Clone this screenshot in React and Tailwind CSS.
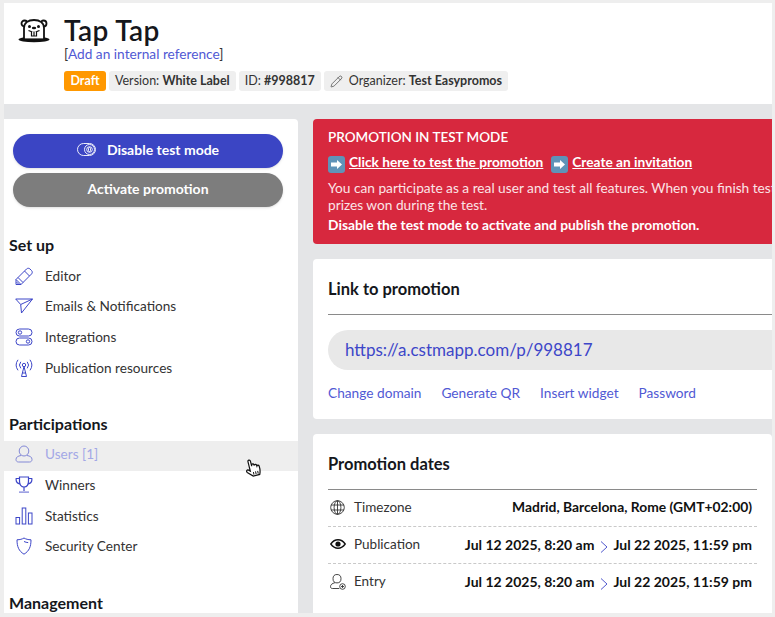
import React from "react";
import { Pencil } from "lucide-react";

function Mascot() {
  return (
    <svg width="32" height="24" viewBox="0 0 32 24" fill="none" stroke="#111" strokeWidth="1.800">
      <ellipse cx="16" cy="20.500" rx="15.500" ry="2.800" fill="#111" stroke="none" />
      <circle cx="6.500" cy="4.500" r="3" fill="#fff" />
      <circle cx="25.500" cy="4.500" r="3" fill="#fff" />
      <path d="M6 20.500V9c0-5 4-8 10-8s10 3 10 8v11.500z" fill="#fff" />
      <path d="M6 20.800h20" stroke="#111" strokeWidth="2" />
      <circle cx="11.500" cy="7.500" r="1.500" fill="#111" stroke="none" />
      <circle cx="20.500" cy="7.500" r="1.500" fill="#111" stroke="none" />
      <ellipse cx="16" cy="9" rx="2.200" ry="1.300" fill="#111" stroke="none" />
      <path d="M10.500 11.500c3 1.500 8 1.500 11 0" strokeWidth="1.300" />
      <path d="M13.500 12.300v4.700h5v-4.700M16 12.800v4" fill="#fff" strokeWidth="1.200" />
    </svg>
  );
}

function ToggleIcon() {
  return (
    <svg width="19" height="13" viewBox="0 0 19 13" fill="none" stroke="#fff" strokeWidth="0.900">
      <rect x="0.500" y="0.500" width="18" height="12" rx="6" />
      <circle cx="12.500" cy="6.500" r="5" />
      <circle cx="12.500" cy="6.500" r="2.800" />
      <rect x="11.500" y="4.500" width="2" height="4" rx="1" />
    </svg>
  );
}

function EditorIcon() {
  return (
    <svg width="18" height="18" viewBox="0 0 18 18" fill="none" stroke="#3d46c8" strokeWidth="1">
      <path d="M1 12.500L11.500 2c1-1 2.500-1 3.500 0l1.500 1.500c1 1 1 2.500 0 3.500L6 17.500H1z" />
      <path d="M1 12.500l5 5M3 10.500l5 5M9.500 4l5 5M1.500 15l2.500 2.500" />
    </svg>
  );
}

function MailIcon() {
  return (
    <svg width="18" height="16" viewBox="0 0 18 16" fill="none" stroke="#3d46c8" strokeWidth="1">
      <path d="M.7 1h16.800L6.500 15 5.700 6.500z" />
      <path d="M5.700 6.500L17.500 1" />
    </svg>
  );
}

function IntegrationsIcon() {
  return (
    <svg width="18" height="18" viewBox="0 0 18 18" fill="none" stroke="#3d46c8" strokeWidth="1">
      <rect x="1" y="1" width="16" height="7" rx="3.500" />
      <circle cx="5" cy="4.500" r="1.700" />
      <rect x="1" y="10" width="16" height="7" rx="3.500" />
      <circle cx="13" cy="13.500" r="1.700" />
    </svg>
  );
}

function AntennaIcon() {
  return (
    <svg width="18" height="18" viewBox="0 0 18 18" fill="none" stroke="#3d46c8" strokeWidth="1">
      <circle cx="9" cy="6" r="1.700" />
      <path d="M9 7.500l-2.500 10M9 7.500l2.500 10M6.500 17.500h5M7.200 14h3.600" />
      <path d="M5.800 2.800a5 5 0 0 0 0 6.500M12.200 2.800a5 5 0 0 1 0 6.500" />
      <path d="M3 .8a9 9 0 0 0 0 10.500M15 .8a9 9 0 0 1 0 10.500" />
    </svg>
  );
}

function UserIcon() {
  return (
    <svg width="18" height="18" viewBox="0 0 18 18" fill="none" stroke="#3d46c8" strokeWidth="1">
      <ellipse cx="9" cy="6" rx="4.800" ry="5" />
      <path d="M6 10.500C3 11 1 12 1 14.500 1 16 2 17 3.500 17h11c1.500 0 2.500-1 2.500-2.500 0-2.500-2-3.500-5-4" />
    </svg>
  );
}

function TrophyIcon() {
  return (
    <svg width="18" height="18" viewBox="0 0 18 18" fill="none" stroke="#3d46c8" strokeWidth="1.200">
      <path d="M4.500 1h9v4c0 3.500-1.800 6-4.500 6S4.500 8.500 4.500 5z" />
      <path d="M4.500 2.500H1.200c-.4 2.800 1 4.800 3.800 5.300M13.500 2.500h3.300c.4 2.800-1 4.800-3.800 5.300" />
      <path d="M9 11v4" />
      <path d="M4 15.300h10V17H4z" fill="#3d46c8" fillOpacity="0.500" stroke="none" />
    </svg>
  );
}

function StatsIcon() {
  return (
    <svg width="18" height="18" viewBox="0 0 18 18" fill="none" stroke="#3d46c8" strokeWidth="1">
      <rect x="1" y="10.500" width="3.600" height="6.500" />
      <rect x="7.200" y="1" width="3.600" height="16" />
      <rect x="13.400" y="6" width="3.600" height="11" />
    </svg>
  );
}

function ShieldIcon() {
  return (
    <svg width="18" height="18" viewBox="0 0 18 18" fill="none" stroke="#3d46c8" strokeWidth="1">
      <path d="M9 1c2 1.200 4 1.700 7 1.800 0 6.700-1.700 11.200-7 14.400C3.700 14 2 9.500 2 2.800 5 2.700 7 2.200 9 1z" />
      <path d="M9 4.500c1.400.7 2.800 1 4.200 1.100" />
    </svg>
  );
}

function GlobeIcon() {
  return (
    <svg width="15" height="15" viewBox="0 0 15 15" fill="none" stroke="#333" strokeWidth="0.900">
      <circle cx="7.500" cy="7.500" r="6.800" />
      <ellipse cx="7.500" cy="7.500" rx="3.400" ry="6.800" />
      <path d="M7.500 .7v13.600M1 5h13M1 10h13" />
    </svg>
  );
}

function EyeIcon() {
  return (
    <svg width="16" height="10" viewBox="0 0 16 10" fill="none" stroke="#111" strokeWidth="1.400">
      <path d="M.8 5C2.800 2.200 5.200.8 8 .8s5.200 1.400 7.200 4.200C13.200 7.800 10.800 9.200 8 9.200S2.800 7.800.8 5z" />
      <circle cx="8" cy="5" r="2.600" fill="#111" stroke="none" />
    </svg>
  );
}

function EntryIcon() {
  return (
    <svg width="16" height="16" viewBox="0 0 16 16" fill="none" stroke="#333" strokeWidth="0.900">
      <ellipse cx="7" cy="4.700" rx="4" ry="4.200" />
      <path d="M4.800 8.800C2.200 9.300.5 10.700.5 12.700c0 1.100.7 1.800 1.800 1.800h7" />
      <circle cx="12.500" cy="12.500" r="2.800" />
      <path d="M12.500 11v3M11 12.500h3" />
    </svg>
  );
}

function HandCursor() {
  return (
    <svg width="19" height="22" viewBox="0 0 17 20" className="absolute left-[240px] top-[16px] -rotate-[14deg]">
      <path
        d="M5 12V3.200c0-1.600 2.300-1.600 2.300 0V8l.2-1c.4-1.200 2-1 2.100.2l.1.800c.4-1.100 2-.9 2.100.3l.1.700c.5-.9 1.900-.6 2 .5.200 2.500 0 5-1.300 7.500H6.500L2 12.500c-1-1.200.5-2.700 1.700-1.700z"
        fill="#fff"
        stroke="#111"
        strokeWidth="1.100"
      />
      <path d="M7.500 13.500v2.500M9.500 13.500v2.500M11.500 13.500v2.500" stroke="#111" strokeWidth="0.900" />
    </svg>
  );
}

function ArrowEmoji() {
  return (
    <span className="inline-flex items-center justify-center w-[17px] h-[17px] rounded-[3px] bg-[#5f93b8] mr-[4px] align-[-3px]">
      <svg width="13" height="11" viewBox="0 0 13 11" fill="#fff">
        <path d="M1 3.500h6V1l5 4.500L7 10V7.500H1z" />
      </svg>
    </span>
  );
}

function SideItem({ icon, label, faded, className }) {
  return (
    <div
      className={
        "flex items-center h-[30px] pb-[4px] pl-[11px] text-[13.600px] " +
        (className ? className + " " : "") +
        (faded ? "bg-[#eeeeee] text-[#a3a8e6]" : "text-[#333]")
      }
    >
      <span className={"w-[18px] h-[18px] flex items-center " + (faded ? "opacity-60" : "")}>{icon}</span>
      <span className="ml-[12px]">{label}</span>
    </div>
  );
}

function Badge({ children, className }) {
  return (
    <span className={"h-[20px] flex items-center px-[6px] rounded-[3px] bg-[#efefef] text-[12.500px] text-[#333] " + (className || "")}>
      {children}
    </span>
  );
}

function DateRow({ icon, label, last, children }) {
  return (
    <div className={"flex items-center justify-between h-[37px] pb-[2px] pr-[5px] " + (last ? "" : "border-b border-dashed border-[#c9c9c9]")}>
      <div className="flex items-center text-[13.500px] text-[#333]">
        <span className="w-[26px] pl-[2px] flex items-center">{icon}</span>
        {label}
      </div>
      <div className="flex items-center font-bold text-[#111]">{children}</div>
    </div>
  );
}

function Range() {
  return (
    <span className="flex items-center text-[14px]">
      Jul 12 2025, 8:20 am
      <svg width="8" height="12" viewBox="0 0 8 12" fill="none" stroke="#3d46c8" strokeWidth="0.900" className="ml-[6px] mr-[5px] mt-[5px]">
        <path d="M1 .5l6 5.500-6 5.500" />
      </svg>
      Jul 22 2025, 11:59 pm
    </span>
  );
}

export default function App() {
  return (
    <div className="w-[775px] h-[617px] overflow-hidden bg-[#eeeeee] pt-[3px] pl-[4px] pr-[3px] pb-[4px] font-['Lato','Noto_Sans',sans-serif]">
      <div className="h-full flex flex-col bg-[#e4e5e7] overflow-hidden">
        <header className="h-[101px] shrink-0 bg-white flex">
          <div className="w-[60px] pl-[14px] pt-[16px]">
            <Mascot />
          </div>
          <div className="pt-[11px]">
            <h1 className="text-[28px] leading-[32px] tracking-[0.4px] font-semibold text-[#15171c]">Tap Tap</h1>
            <div className="text-[13.700px] leading-[16px] text-[#333]">
              [<span className="text-[#5159d4]">Add an internal reference</span>]
            </div>
            <div className="flex gap-[3px] mt-[9px]">
              <Badge className="bg-[#ff9800] text-white font-bold w-[42px] justify-center">Draft</Badge>
              <Badge>
                Version:&nbsp;<b>White Label</b>
              </Badge>
              <Badge>
                ID:&nbsp;<b>#998817</b>
              </Badge>
              <Badge>
                <Pencil size={13} strokeWidth={1.200} className="mr-[6px]" />
                Organizer:&nbsp;<b>Test Easypromos</b>
              </Badge>
            </div>
          </div>
        </header>

        <div className="flex gap-[15px] mt-[15px] flex-1 min-h-0">
          <aside className="w-[294px] shrink-0 bg-white rounded-tr-[4px] overflow-hidden pt-[15px]">
            <div className="pl-[9px] pr-[15px] flex flex-col gap-[5px]">
              <button className="h-[34px] pb-[4px] rounded-full bg-[#3b45c4] text-white font-bold text-[14px] flex items-center justify-center gap-[11px] shadow-sm">
                <ToggleIcon />
                Disable test mode
              </button>
              <button className="h-[34px] pb-[4px] rounded-full bg-[#7d7d7d] text-white font-bold text-[14px] shadow-sm">
                Activate promotion
              </button>
            </div>
            <h2 className="mt-[27px] ml-[5px] text-[16px] leading-[22px] font-bold text-[#15171c]">Set up</h2>
            <div className="mt-[7px]">
              <SideItem icon={<EditorIcon />} label="Editor" />
              <SideItem icon={<MailIcon />} label="Emails & Notifications" />
              <SideItem icon={<IntegrationsIcon />} label="Integrations" className="mt-[1px]" />
              <SideItem icon={<AntennaIcon />} label="Publication resources" className="mt-[1px]" />
            </div>
            <h2 className="mt-[28px] ml-[5px] text-[16px] leading-[22px] font-bold text-[#15171c]">Participations</h2>
            <div className="mt-[6px] relative">
              <SideItem icon={<UserIcon />} label="Users [1]" faded />
              <SideItem icon={<TrophyIcon />} label="Winners" className="mt-[1px]" />
              <SideItem icon={<StatsIcon />} label="Statistics" className="mt-[1px]" />
              <SideItem icon={<ShieldIcon />} label="Security Center" />
              <HandCursor />
            </div>
            <h2 className="mt-[29px] ml-[5px] text-[16px] leading-[22px] font-bold text-[#15171c]">Management</h2>
          </aside>

          <main className="flex-1 min-w-0 overflow-hidden">
            <div className="w-[600px] h-[125px] bg-[#d7283e] rounded-l-[4px] text-white px-[15px] pt-[9px]">
              <div className="text-[13.500px] leading-[18px] font-semibold">PROMOTION IN TEST MODE</div>
              <div className="mt-[6px] text-[13.700px] leading-[20px] font-bold">
                <ArrowEmoji />
                <span className="underline">Click here to test the promotion</span>
                <span className="ml-[8px]">
                  <ArrowEmoji />
                  <span className="underline">Create an invitation</span>
                </span>
              </div>
              <p className="mt-[6px] text-[13.700px] leading-[17px] text-[#fbe4e7]">
                You can participate as a real user and test all features. When you finish testing, remove the
                <br />
                prizes won during the test.
              </p>
              <p className="mt-[3px] text-[13.800px] leading-[18px] font-bold">
                Disable the test mode to activate and publish the promotion.
              </p>
            </div>

            <section className="w-[600px] h-[160px] mt-[15px] bg-white rounded-l-[4px] pl-[15px] pt-[19px]">
              <h2 className="text-[16.500px] leading-[22px] font-bold text-[#15171c]">Link to promotion</h2>
              <div className="mt-[14px] border-t border-[#8a8a8a]" />
              <div className="mt-[15px] h-[40px] rounded-l-full bg-[#e8e8e8] flex items-center pl-[17px] text-[17px] text-[#3d46c8]">
                https://a.cstmapp.com/p/998817
              </div>
              <div className="mt-[14px] flex gap-[20px] text-[13.700px] leading-[18px] text-[#5159d4]">
                <span>Change domain</span>
                <span>Generate QR</span>
                <span>Insert widget</span>
                <span>Password</span>
              </div>
            </section>

            <section className="mt-[15px] h-[200px] bg-white rounded-t-[4px] px-[15px] pt-[19px]">
              <h2 className="text-[16.500px] leading-[22px] font-bold text-[#15171c]">Promotion dates</h2>
              <div className="mt-[14px] border-t border-[#8a8a8a]" />
              <DateRow icon={<GlobeIcon />} label="Timezone">
                <span className="text-[13.850px]">Madrid, Barcelona, Rome (GMT+02:00)</span>
              </DateRow>
              <DateRow icon={<EyeIcon />} label="Publication">
                <Range />
              </DateRow>
              <DateRow icon={<EntryIcon />} label="Entry" last>
                <Range />
              </DateRow>
            </section>
          </main>
        </div>
      </div>
    </div>
  );
}
